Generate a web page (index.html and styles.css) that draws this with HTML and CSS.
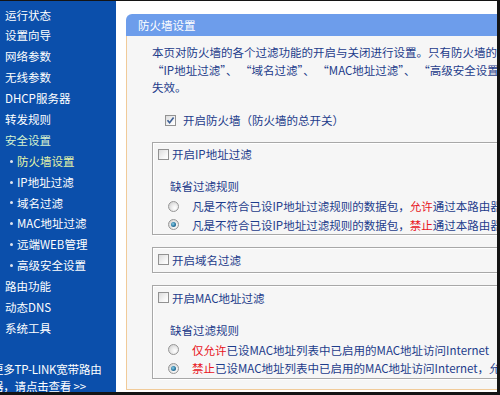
FILE: index.html
```html
<!DOCTYPE html>
<html lang="zh-CN">
<head>
<meta charset="utf-8">
<title>防火墙设置</title>
<link rel="stylesheet" href="styles.css">
</head>
<body>
<div class="frame">
  <nav class="side">
    <ul class="nav">
      <li class="nav-item">运行状态</li>
      <li class="nav-item">设置向导</li>
      <li class="nav-item">网络参数</li>
      <li class="nav-item">无线参数</li>
      <li class="nav-item">DHCP服务器</li>
      <li class="nav-item">转发规则</li>
      <li class="nav-item open">安全设置</li>
      <li class="nav-sub current"><span class="dot"></span>防火墙设置</li>
      <li class="nav-sub"><span class="dot"></span>IP地址过滤</li>
      <li class="nav-sub"><span class="dot"></span>域名过滤</li>
      <li class="nav-sub"><span class="dot"></span>MAC地址过滤</li>
      <li class="nav-sub"><span class="dot"></span>远端WEB管理</li>
      <li class="nav-sub"><span class="dot"></span>高级安全设置</li>
      <li class="nav-item">路由功能</li>
      <li class="nav-item">动态DNS</li>
      <li class="nav-item">系统工具</li>
    </ul>
    <p class="more">更多TP-LINK宽带路由<br>器，请点击查看 &gt;&gt;</p>
  </nav>
  <main class="main">
    <section class="panel">
      <h1 class="panel-head">防火墙设置</h1>
      <div class="panel-body">
        <p class="desc">本页对防火墙的各个过滤功能的开启与关闭进行设置。只有防火墙的总开关是开启的时候，后续的<br><span class="fw">“</span>IP地址过滤<span class="fw">”</span>、 <span class="fw">“</span>域名过滤<span class="fw">”</span>、 <span class="fw">“</span>MAC地址过滤<span class="fw">”</span>、 <span class="fw">“</span>高级安全设置<span class="fw">”</span>才能够生效，反之，则<br>失效。</p>
        <div class="master"><span class="cb checked"><svg viewBox="0 0 11 11" width="11" height="11"><path d="M2.5 5.2 L4.6 7.8 L8.6 2.4" fill="none" stroke="#3d5f95" stroke-width="1.6"/></svg></span><span class="cb-label">开启防火墙（防火墙的总开关）</span></div>

        <div class="group">
          <div class="group-head"><span class="cb"></span><span class="cb-label tight">开启IP地址过滤</span></div>
          <div class="rule-title">缺省过滤规则</div>
          <div class="radio-row"><span class="radio"></span><span>凡是不符合已设IP地址过滤规则的数据包，<em class="red">允许</em>通过本路由器</span></div>
          <div class="radio-row"><span class="radio on"></span><span>凡是不符合已设IP地址过滤规则的数据包，<em class="red">禁止</em>通过本路由器</span></div>
        </div>

        <div class="group short">
          <div class="group-head"><span class="cb"></span><span class="cb-label tight">开启域名过滤</span></div>
        </div>

        <div class="group">
          <div class="group-head"><span class="cb"></span><span class="cb-label tight">开启MAC地址过滤</span></div>
          <div class="rule-title">缺省过滤规则</div>
          <div class="radio-row"><span class="radio"></span><span><em class="red">仅允许</em>已设MAC地址列表中已启用的MAC地址访问Internet</span></div>
          <div class="radio-row"><span class="radio on"></span><span><em class="red">禁止</em>已设MAC地址列表中已启用的MAC地址访问Internet，允许其他</span></div>
        </div>
      </div>
    </section>
  </main>
</div>
</body>
</html>
```
FILE: styles.css
```css
* { box-sizing: border-box; }
html, body { margin: 0; padding: 0; }
body {
  width: 500px;
  height: 395px;
  overflow: hidden;
  background: #fff;
  font-family: "Noto Sans CJK SC", "Noto Sans", sans-serif;
  font-size: 11.5px;
}
.frame {
  display: flex;
  width: 500px;
  height: 395px;
  border-top: 1px solid #141414;
  border-right: 3px solid #141414;
  border-bottom: 3px solid #141414;
  overflow: hidden;
}
.side {
  width: 116px;
  flex: none;
  background: #0b4fab;
  color: #fff;
  overflow: hidden;
}
.nav {
  list-style: none;
  margin: 0;
  padding: 3.5px 0 0 0;
}
.nav-item, .nav-sub {
  height: 20.9px;
  line-height: 20.9px;
  white-space: nowrap;
  display: flex;
  align-items: center;
}
.nav-item { padding-left: 5px; }
.nav-item.open { color: #d6f3cf; }
.nav-sub { padding-left: 10px; }
.nav-sub.current { color: #e4f4a8; }
.dot {
  width: 3px;
  height: 3px;
  border-radius: 50%;
  background: #dde4f0;
  margin-right: 4px;
  flex: none;
}
.more {
  margin: 22px 0 0 -8px;
  line-height: 17px;
  white-space: nowrap;
  color: #fff;
  letter-spacing: -0.2px;
}
.main {
  flex: 1;
  min-width: 0;
  overflow: hidden;
  background: #fff;
  padding: 13px 0 2px 10px;
  display: flex;
  flex-direction: column;
}
.panel {
  width: 430px;
  flex: 1;
  display: flex;
  flex-direction: column;
}
.panel-head {
  margin: 0;
  height: 22px;
  line-height: 22px;
  padding-left: 12px;
  background: #6d9deb;
  color: #fff;
  font-size: 11.5px;
  font-weight: normal;
  border-radius: 6px 0 0 0;
}
.panel-body {
  flex: 1;
  background: #f6f6f6;
  border-left: 1px solid #f1cb99;
  border-bottom: 1px solid #f1cb99;
  padding: 8px 0 0 25px;
  color: #1d3c8b;
}
.desc {
  margin: 0;
  line-height: 17.5px;
  white-space: nowrap;
}
.fw { font-variant-east-asian: full-width; }
.master {
  margin-top: 16px;
  height: 15px;
  display: flex;
  align-items: center;
  padding-left: 13px;
}
.cb {
  width: 11px;
  height: 11px;
  flex: none;
  border: 1px solid #929292;
  background: linear-gradient(135deg, #dcdcdc, #f8f8f8 70%, #fff);
  display: inline-flex;
  align-items: center;
  justify-content: center;
}
.cb svg { display: block; margin: -1px; }
.cb-label { margin-left: 7px; white-space: nowrap; }
.cb-label.tight { margin-left: 3px; }
.group {
  margin-top: 14px;
  border: 1px solid #a8a8a8;
  box-shadow: inset 1px 1px 0 #fff, 1px 1px 0 #fff;
  padding: 4px 0 0 5px;
}
.group + .group { margin-top: 12px; }
.group.short { padding-bottom: 5px; }
.group-head {
  height: 15px;
  display: flex;
  align-items: center;
}
.rule-title {
  margin: 17.5px 0 0 12px;
  line-height: 15px;
}
.radio-row {
  height: 18.5px;
  display: flex;
  align-items: center;
  white-space: nowrap;
  padding-left: 10px;
}
.rule-title + .radio-row { margin-top: 3px; }
.radio {
  width: 11px;
  height: 11px;
  flex: none;
  border-radius: 50%;
  border: 1px solid #969696;
  background: radial-gradient(circle at 65% 65%, #ffffff 0, #ececec 40%, #c8c8c8 100%);
  margin-right: 13px;
  position: relative;
}
.radio.on::after {
  content: "";
  position: absolute;
  left: 2px;
  top: 2px;
  width: 5px;
  height: 5px;
  border-radius: 50%;
  background: radial-gradient(circle at 40% 40%, #8fd0e8 0, #2f7fa8 50%, #163f63 100%);
}
.red { color: #e8141c; font-style: normal; }
```
